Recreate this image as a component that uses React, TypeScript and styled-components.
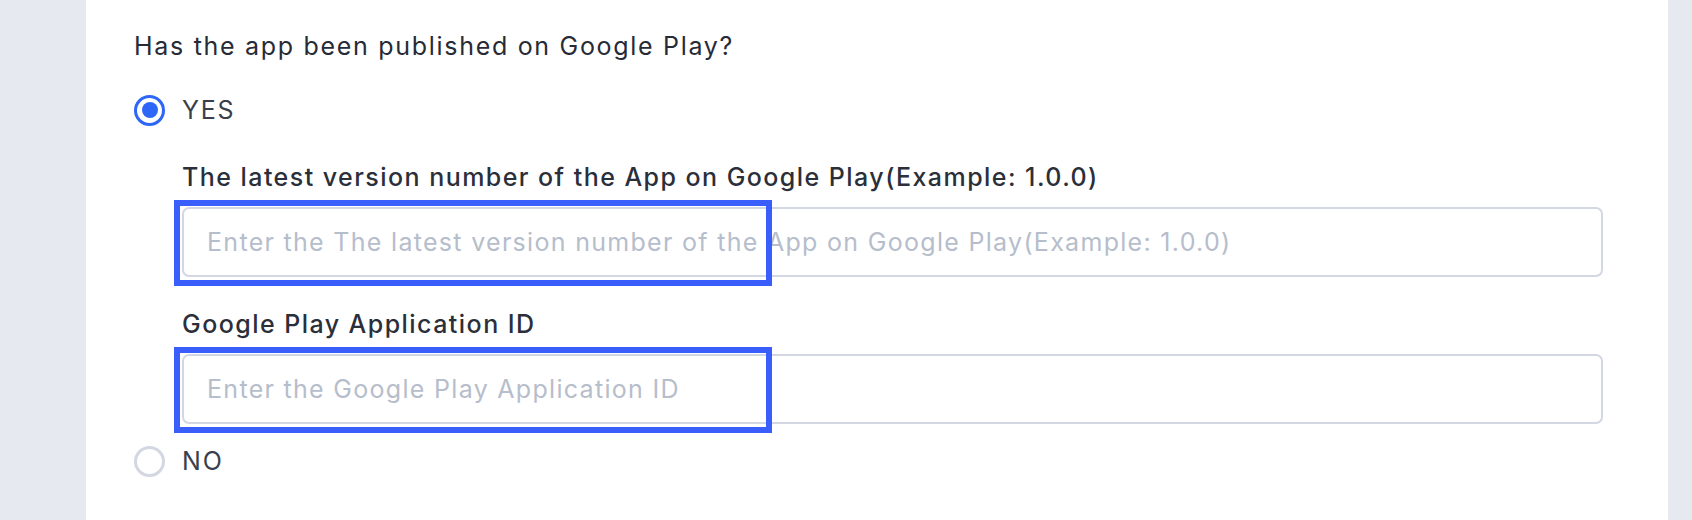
import React from "react";
import styled, { createGlobalStyle } from "styled-components";

const Global = createGlobalStyle`
  html, body { margin: 0; padding: 0; background: #e6e9ef; }
  body { font-family: Inter, "Noto Sans", sans-serif; }
  * { box-sizing: border-box; }
`;

const Page = styled.div`
  display: flex;
  width: 1692px;
  height: 520px;
  overflow: hidden;
  padding-left: 86px;
  padding-right: 24px;
`;

const Panel = styled.div`
  flex: 1;
  background: #ffffff;
  padding: 28px 65px 0 48px;
  display: flex;
  flex-direction: column;
`;

const Question = styled.div`
  font-size: 25px;
  line-height: 36px;
  letter-spacing: 1.7px;
  color: #272b36;
`;

const RadioRow = styled.label<{ $top: number }>`
  display: flex;
  align-items: center;
  gap: 17px;
  height: 36px;
  margin-top: ${(p) => p.$top}px;
`;

const RadioCircle = styled.span<{ $checked?: boolean }>`
  width: 31px;
  height: 31px;
  border-radius: 50%;
  border: 3px solid ${(p) => (p.$checked ? "#2e66f7" : "#d3d7e2")};
  display: flex;
  align-items: center;
  justify-content: center;
  flex: none;
  &::after {
    content: "";
    width: 16px;
    height: 16px;
    border-radius: 50%;
    background: ${(p) => (p.$checked ? "#2e66f7" : "transparent")};
  }
`;

const RadioText = styled.span`
  font-size: 25px;
  letter-spacing: 1.8px;
  color: #3a3f4b;
`;

const Nested = styled.div`
  padding-left: 48px;
  display: flex;
  flex-direction: column;
`;

const FieldLabel = styled.div<{ $top: number }>`
  font-size: 25px;
  font-weight: 500;
  line-height: 36px;
  letter-spacing: 1.45px;
  color: #2b2f3a;
  margin-top: ${(p) => p.$top}px;
`;

const InputWrap = styled.div`
  position: relative;
  margin-top: 12px;
`;

const Input = styled.input`
  display: block;
  width: 100%;
  height: 70px;
  border: 2px solid #d3d7e3;
  border-radius: 7px;
  padding: 0 23px;
  font-family: inherit;
  font-size: 25px;
  letter-spacing: 1.3px;
  color: #272b36;
  background: #fff;
  outline: none;
  &::placeholder {
    color: #b6bdcb;
  }
`;

const Highlight = styled.div`
  position: absolute;
  left: -8px;
  top: -7px;
  width: 598px;
  height: 86px;
  border: 6px solid #3a5efc;
  pointer-events: none;
`;

export default function App() {
  return (
    <>
      <Global />
      <Page>
        <Panel>
          <Question>Has the app been published on Google Play?</Question>
          <RadioRow $top={28}>
            <RadioCircle $checked />
            <RadioText>YES</RadioText>
          </RadioRow>
          <Nested>
            <FieldLabel $top={31}>
              The latest version number of the App on Google Play(Example: 1.0.0)
            </FieldLabel>
            <InputWrap>
              <Input placeholder="Enter the The latest version number of the App on Google Play(Example: 1.0.0)" />
              <Highlight />
            </InputWrap>
            <FieldLabel $top={29}>Google Play Application ID</FieldLabel>
            <InputWrap>
              <Input placeholder="Enter the Google Play Application ID" />
              <Highlight />
            </InputWrap>
          </Nested>
          <RadioRow $top={19}>
            <RadioCircle />
            <RadioText>NO</RadioText>
          </RadioRow>
        </Panel>
      </Page>
    </>
  );
}
